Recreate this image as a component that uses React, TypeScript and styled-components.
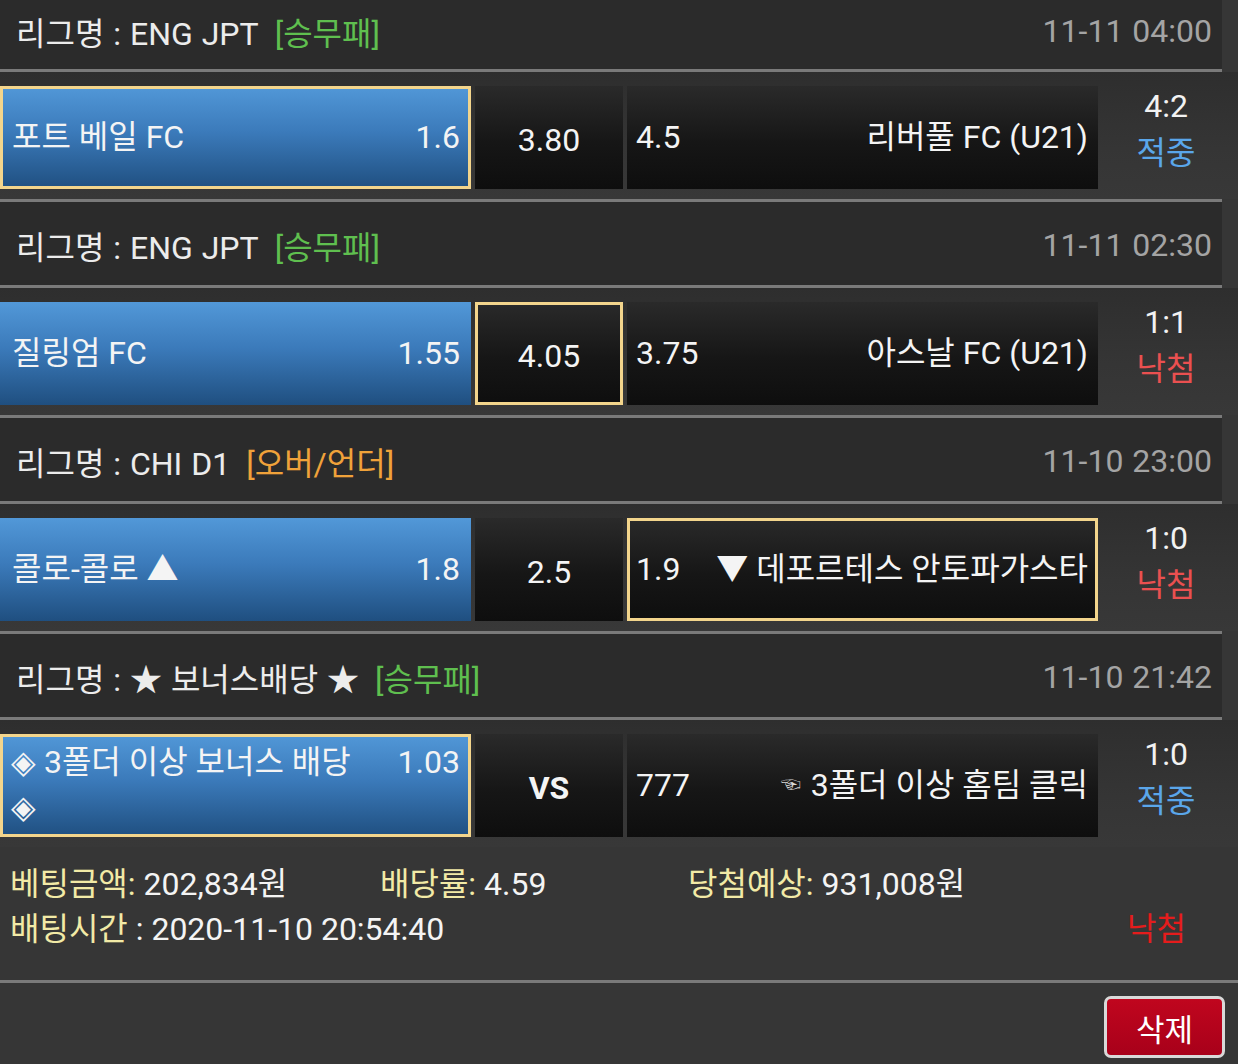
import React from "react";
import styled, { createGlobalStyle } from "styled-components";

const GlobalStyle = createGlobalStyle`
  html, body {
    margin: 0;
    padding: 0;
    background: #363636;
  }
  body {
    font-family: Roboto, "Noto Sans CJK KR", "Noto Sans", sans-serif;
    color: #f0f0f0;
    -webkit-font-smoothing: antialiased;
  }
  * { box-sizing: border-box; }
`;

const Page = styled.div`
  width: 1238px;
  height: 1064px;
  overflow: hidden;
  background: #363636;
  display: flex;
  flex-direction: column;
  & > * {
    flex-shrink: 0;
  }
`;

const LeagueHeader = styled.div<{ $first?: boolean }>`
  width: 1222px;
  height: ${(p) => (p.$first ? "72px" : "89px")};
  background: #2b2b2b;
  border-top: ${(p) => (p.$first ? "none" : "3px solid #7a7a7a")};
  border-bottom: 3px solid #7a7a7a;
  display: flex;
  align-items: center;
  justify-content: space-between;
  padding: ${(p) => (p.$first ? "0 10px 7px 16px" : "2px 10px 0 16px")};
  font-size: 32px;
  word-spacing: 1px;
`;

const LeagueName = styled.div`
  color: #ececec;
  white-space: nowrap;
`;

const Tag = styled.span<{ $color: string }>`
  color: ${(p) => p.$color};
  margin-left: 16px;
`;

const Time = styled.div`
  color: #a4a4a4;
  font-size: 32px;
`;

const MatchRow = styled.div`
  height: 127px;
  display: grid;
  grid-template-columns: 471px 148px 471px 1fr;
  grid-template-rows: minmax(0, 1fr);
  column-gap: 4px;
  align-items: stretch;
  padding: 14px 0 10px 0;
  background: linear-gradient(to bottom, #2e2e2e 0%, #353535 60%, #383838 100%);
`;

const Cell = styled.div<{ $selected?: boolean; $home?: boolean }>`
  border: 3px solid ${(p) => (p.$selected ? "#f3d58c" : "transparent")};
  background: ${(p) =>
    p.$home
      ? "linear-gradient(to bottom, #5298d8 0%, #3b7aba 45%, #1f4f80 100%)"
      : "linear-gradient(to bottom, #2a2a2a 0%, #161616 55%, #0e0e0e 100%)"};
  background-origin: border-box;
  color: #f4f4f4;
  font-size: 32px;
  display: flex;
  align-items: center;
  white-space: nowrap;
`;

const TeamCell = styled(Cell)<{ $top?: boolean }>`
  justify-content: space-between;
  padding: ${(p) => (p.$top ? "3px 8px 0 8px" : "0 8px 0 9px")};
  align-items: ${(p) => (p.$top ? "flex-start" : "center")};
  ${(p) => (p.$home ? "" : "padding-left: 6px; padding-right: 7px;")}
`;

const DrawCell = styled(Cell)<{ $bold?: boolean }>`
  justify-content: center;
  padding-top: 4px;
  font-weight: ${(p) => (p.$bold ? 700 : 400)};
`;

const TeamName = styled.span<{ $wrap?: boolean }>`
  white-space: ${(p) => (p.$wrap ? "normal" : "nowrap")};
  line-height: 45px;
  max-width: ${(p) => (p.$wrap ? "355px" : "none")};
`;

const Odds = styled.span`
  line-height: 45px;
`;

const Pointer = styled.span`
  font-size: 20px;
  color: #d8d8d8;
  margin-right: 10px;
  vertical-align: 4px;
`;

const ScoreCol = styled.div`
  display: flex;
  flex-direction: column;
  align-items: center;
  justify-content: center;
  padding: 0 8px 16px 0;
  font-size: 32px;
  line-height: 47px;
`;

const ScoreText = styled.div`
  color: #f2f2f2;
`;

const Result = styled.div<{ $win?: boolean }>`
  color: ${(p) => (p.$win ? "#5aa6ea" : "#ea5050")};
`;

const Summary = styled.div`
  padding: 15px 0 0 10px;
  height: 136px;
  border-bottom: 3px solid #7a7a7a;
  font-size: 32px;
  line-height: 45px;
`;

const SummaryLine = styled.div`
  display: grid;
  grid-template-columns: 370px 308px 1fr;
  white-space: nowrap;
`;

const SummaryLine2 = styled.div`
  display: flex;
  justify-content: space-between;
  padding-right: 52px;
  white-space: nowrap;
`;

const Label = styled.span`
  color: #f2eaa6;
`;

const Value = styled.span`
  color: #f4f4f4;
`;

const LoseText = styled.span`
  color: #e51c1c;
`;

const Footer = styled.div`
  display: flex;
  justify-content: flex-end;
  padding: 13px 13px 0 0;
`;

const DeleteButton = styled.button`
  width: 121px;
  height: 62px;
  border: 3px solid #d9d9d9;
  border-radius: 7px;
  background: linear-gradient(to bottom, #c0061e 0%, #a8001a 100%);
  color: #ffffff;
  font-family: Roboto, "Noto Sans CJK KR", sans-serif;
  font-size: 31px;
  padding: 0;
  cursor: pointer;
`;

type Match = {
  league: React.ReactNode;
  tag: string;
  tagColor: string;
  time: string;
  home: string;
  homeOdds: string;
  draw: string;
  drawBold?: boolean;
  awayOdds: string;
  away: React.ReactNode;
  selected: "home" | "draw" | "away" | null;
  score: string;
  win: boolean;
  homeTop?: boolean;
};

const matches: Match[] = [
  {
    league: "리그명 : ENG JPT",
    tag: "[승무패]",
    tagColor: "#5fbf4f",
    time: "11-11 04:00",
    home: "포트 베일 FC",
    homeOdds: "1.6",
    draw: "3.80",
    awayOdds: "4.5",
    away: "리버풀 FC (U21)",
    selected: "home",
    score: "4:2",
    win: true,
  },
  {
    league: "리그명 : ENG JPT",
    tag: "[승무패]",
    tagColor: "#5fbf4f",
    time: "11-11 02:30",
    home: "질링엄 FC",
    homeOdds: "1.55",
    draw: "4.05",
    awayOdds: "3.75",
    away: "아스날 FC (U21)",
    selected: "draw",
    score: "1:1",
    win: false,
  },
  {
    league: "리그명 : CHI D1",
    tag: "[오버/언더]",
    tagColor: "#f0a23a",
    time: "11-10 23:00",
    home: "콜로-콜로 ▲",
    homeOdds: "1.8",
    draw: "2.5",
    awayOdds: "1.9",
    away: "▼ 데포르테스 안토파가스타",
    selected: "away",
    score: "1:0",
    win: false,
  },
  {
    league: "리그명 : ★ 보너스배당 ★",
    tag: "[승무패]",
    tagColor: "#5fbf4f",
    time: "11-10 21:42",
    home: "◈ 3폴더 이상 보너스 배당 ◈",
    homeOdds: "1.03",
    draw: "VS",
    drawBold: true,
    awayOdds: "777",
    away: (
      <>
        <Pointer>☜</Pointer>3폴더 이상 홈팀 클릭
      </>
    ),
    selected: "home",
    score: "1:0",
    win: true,
    homeTop: true,
  },
];

export default function App() {
  return (
    <>
      <GlobalStyle />
      <Page>
        {matches.map((m, i) => (
          <React.Fragment key={i}>
            <LeagueHeader $first={i === 0}>
              <LeagueName>
                {m.league}
                <Tag $color={m.tagColor}>{m.tag}</Tag>
              </LeagueName>
              <Time>{m.time}</Time>
            </LeagueHeader>
            <MatchRow>
              <TeamCell $home $selected={m.selected === "home"} $top={m.homeTop}>
                <TeamName $wrap={m.homeTop}>{m.home}</TeamName>
                <Odds>{m.homeOdds}</Odds>
              </TeamCell>
              <DrawCell $selected={m.selected === "draw"} $bold={m.drawBold}>
                {m.draw}
              </DrawCell>
              <TeamCell $selected={m.selected === "away"}>
                <Odds>{m.awayOdds}</Odds>
                <TeamName>{m.away}</TeamName>
              </TeamCell>
              <ScoreCol>
                <ScoreText>{m.score}</ScoreText>
                <Result $win={m.win}>{m.win ? "적중" : "낙첨"}</Result>
              </ScoreCol>
            </MatchRow>
          </React.Fragment>
        ))}
        <Summary>
          <SummaryLine>
            <span>
              <Label>베팅금액:</Label> <Value>202,834원</Value>
            </span>
            <span>
              <Label>배당률:</Label> <Value>4.59</Value>
            </span>
            <span>
              <Label>당첨예상:</Label> <Value>931,008원</Value>
            </span>
          </SummaryLine>
          <SummaryLine2>
            <span>
              <Label>배팅시간</Label> <Value>: 2020-11-10 20:54:40</Value>
            </span>
            <LoseText>낙첨</LoseText>
          </SummaryLine2>
        </Summary>
        <Footer>
          <DeleteButton>삭제</DeleteButton>
        </Footer>
      </Page>
    </>
  );
}
